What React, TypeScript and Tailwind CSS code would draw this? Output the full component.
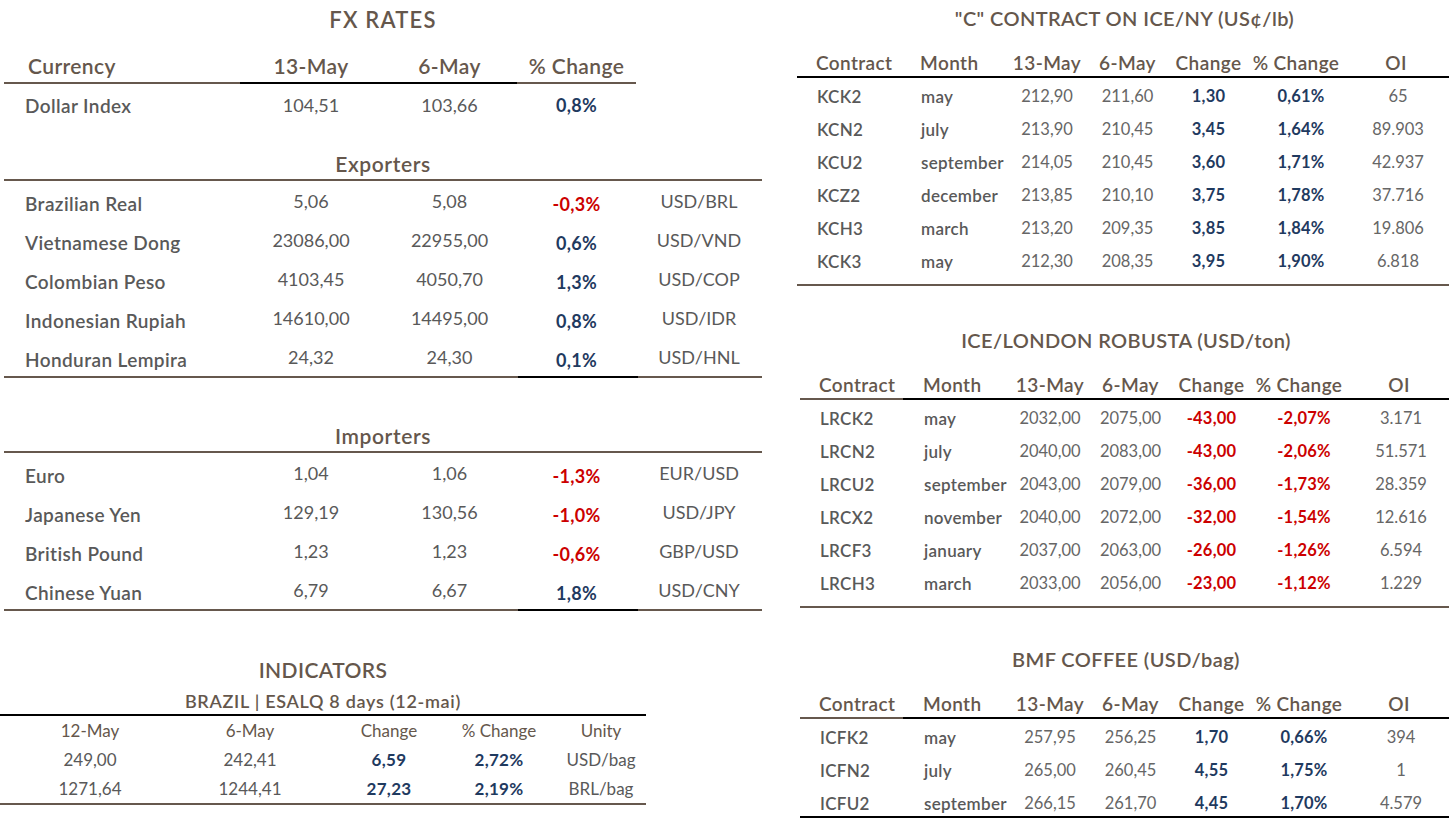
import React from "react";

type FxRow = { name: string; a: string; b: string; pct: string; unit: string };
type FutRow = { code: string; month: string; a: string; b: string; chg: string; pct: string; oi: string };

const BROWN = "bg-[#66584d]";

const exporters: FxRow[] = [
  { name: "Brazilian Real", a: "5,06", b: "5,08", pct: "-0,3%", unit: "USD/BRL" },
  { name: "Vietnamese Dong", a: "23086,00", b: "22955,00", pct: "0,6%", unit: "USD/VND" },
  { name: "Colombian Peso", a: "4103,45", b: "4050,70", pct: "1,3%", unit: "USD/COP" },
  { name: "Indonesian Rupiah", a: "14610,00", b: "14495,00", pct: "0,8%", unit: "USD/IDR" },
  { name: "Honduran Lempira", a: "24,32", b: "24,30", pct: "0,1%", unit: "USD/HNL" },
];

const importers: FxRow[] = [
  { name: "Euro", a: "1,04", b: "1,06", pct: "-1,3%", unit: "EUR/USD" },
  { name: "Japanese Yen", a: "129,19", b: "130,56", pct: "-1,0%", unit: "USD/JPY" },
  { name: "British Pound", a: "1,23", b: "1,23", pct: "-0,6%", unit: "GBP/USD" },
  { name: "Chinese Yuan", a: "6,79", b: "6,67", pct: "1,8%", unit: "USD/CNY" },
];

const arabica: FutRow[] = [
  { code: "KCK2", month: "may", a: "212,90", b: "211,60", chg: "1,30", pct: "0,61%", oi: "65" },
  { code: "KCN2", month: "july", a: "213,90", b: "210,45", chg: "3,45", pct: "1,64%", oi: "89.903" },
  { code: "KCU2", month: "september", a: "214,05", b: "210,45", chg: "3,60", pct: "1,71%", oi: "42.937" },
  { code: "KCZ2", month: "december", a: "213,85", b: "210,10", chg: "3,75", pct: "1,78%", oi: "37.716" },
  { code: "KCH3", month: "march", a: "213,20", b: "209,35", chg: "3,85", pct: "1,84%", oi: "19.806" },
  { code: "KCK3", month: "may", a: "212,30", b: "208,35", chg: "3,95", pct: "1,90%", oi: "6.818" },
];

const robusta: FutRow[] = [
  { code: "LRCK2", month: "may", a: "2032,00", b: "2075,00", chg: "-43,00", pct: "-2,07%", oi: "3.171" },
  { code: "LRCN2", month: "july", a: "2040,00", b: "2083,00", chg: "-43,00", pct: "-2,06%", oi: "51.571" },
  { code: "LRCU2", month: "september", a: "2043,00", b: "2079,00", chg: "-36,00", pct: "-1,73%", oi: "28.359" },
  { code: "LRCX2", month: "november", a: "2040,00", b: "2072,00", chg: "-32,00", pct: "-1,54%", oi: "12.616" },
  { code: "LRCF3", month: "january", a: "2037,00", b: "2063,00", chg: "-26,00", pct: "-1,26%", oi: "6.594" },
  { code: "LRCH3", month: "march", a: "2033,00", b: "2056,00", chg: "-23,00", pct: "-1,12%", oi: "1.229" },
];

const bmf: FutRow[] = [
  { code: "ICFK2", month: "may", a: "257,95", b: "256,25", chg: "1,70", pct: "0,66%", oi: "394" },
  { code: "ICFN2", month: "july", a: "265,00", b: "260,45", chg: "4,55", pct: "1,75%", oi: "1" },
  { code: "ICFU2", month: "september", a: "266,15", b: "261,70", chg: "4,45", pct: "1,70%", oi: "4.579" },
];

const tone = (v: string) => (v.startsWith("-") ? "text-[#cc0000]" : "text-[#1f3a5f]");

function FxLine({ black }: { black: "head" | "foot" }) {
  if (black === "head") {
    return (
      <div className="flex h-[2px] w-[632px]">
        <div className={`w-[236px] ${BROWN}`} />
        <div className="w-[277px] bg-black" />
        <div className={`flex-1 ${BROWN}`} />
      </div>
    );
  }
  return (
    <div className="flex h-[2px]">
      <div className={`w-[514px] ${BROWN}`} />
      <div className="w-[120px] bg-black" />
      <div className={`flex-1 ${BROWN}`} />
    </div>
  );
}

function FxRows({ rows }: { rows: FxRow[] }) {
  return (
    <>
      {rows.map((r) => (
        <div key={r.name} className="grid h-[39px] grid-cols-[236px_142px_135px_119px_126px] items-center pt-[6px] text-[18px]">
          <div className="pl-[21px] text-[19px] font-semibold tracking-[0.4px] text-[#595959]">{r.name}</div>
          <div className="pb-[5px] text-center text-[#595959]">{r.a}</div>
          <div className="pb-[5px] text-center text-[#595959]">{r.b}</div>
          <div className={`text-center font-bold tracking-[0.3px] ${tone(r.pct)}`}>{r.pct}</div>
          <div className="pb-[5px] text-center text-[#595959]">{r.unit}</div>
        </div>
      ))}
    </>
  );
}

function FutTable({ title, rows, splitHead, last }: { title: string; rows: FutRow[]; splitHead?: boolean; last?: boolean }) {
  const cols = "grid grid-cols-[104px_106px_80px_81px_81px_94px_106px]";
  return (
    <div>
      <div className="flex h-[26px] items-center justify-center text-[20px] font-semibold tracking-[0.4px] text-[#65574c]">{title}</div>
      <div className={`${cols} mt-[19px] h-[24px] items-center text-[19px] font-semibold tracking-[0.4px] text-[#65574c]`}>
        <div className="pl-[19px]">Contract</div>
        <div className="pl-[19px]">Month</div>
        <div className="text-center">13-May</div>
        <div className="text-center">6-May</div>
        <div className="text-center">Change</div>
        <div className="text-center">% Change</div>
        <div className="text-center">OI</div>
      </div>
      <div className="mt-[2px] flex h-[2px]">
        <div className={splitHead ? `w-[103px] ${BROWN}` : "w-[103px] bg-black"} />
        <div className="flex-1 bg-black" />
      </div>
      {rows.map((r) => (
        <div key={r.code} className={`${cols} h-[33px] items-center pt-[3px] text-[16.5px]`}>
          <div className="pl-[20px] text-[17px] font-semibold tracking-[0.3px] text-[#595959]">{r.code}</div>
          <div className="pl-[20px] text-[17px] font-semibold tracking-[0.3px] text-[#595959]">{r.month}</div>
          <div className="text-center text-[#666666]">{r.a}</div>
          <div className="text-center text-[#666666]">{r.b}</div>
          <div className={`text-center font-bold tracking-[0.2px] ${tone(r.chg)}`}>{r.chg}</div>
          <div className={`pl-[10px] text-center font-bold tracking-[0.2px] ${tone(r.pct)}`}>{r.pct}</div>
          <div className="pl-[4px] text-center text-[#666666]">{r.oi}</div>
        </div>
      ))}
      <div className={last ? "mt-[-2px] h-[2px] bg-black" : `mt-[8px] h-[2px] ${BROWN}`} />
    </div>
  );
}

export default function App() {
  return (
    <div className="flex h-[819px] w-[1449px] overflow-hidden bg-white font-['Lato',sans-serif] leading-none">
      {/* left: fx + indicators */}
      <div className="w-[762px] shrink-0">
        <div className="ml-[4px]">
          <div className="flex h-[40px] items-center justify-center text-[22px] font-semibold tracking-[1.2px] text-[#65574c]">FX RATES</div>
          <div className="grid h-[42px] w-[632px] grid-cols-[236px_142px_135px_119px] items-end pb-[6px] text-[21px] font-semibold tracking-[0.4px] text-[#65574c]">
            <div className="pl-[24px]">Currency</div>
            <div className="text-center">13-May</div>
            <div className="text-center">6-May</div>
            <div className="text-center">% Change</div>
          </div>
          <FxLine black="head" />
          <div className="grid h-[42px] grid-cols-[236px_142px_135px_119px_126px] items-center text-[18px]">
            <div className="pl-[21px] text-[19px] font-semibold tracking-[0.4px] text-[#595959]">Dollar Index</div>
            <div className="text-center text-[#595959]">104,51</div>
            <div className="text-center text-[#595959]">103,66</div>
            <div className="text-center font-bold tracking-[0.3px] text-[#1f3a5f]">0,8%</div>
            <div />
          </div>

          <div className="flex h-[53px] items-end justify-center pb-[5px] text-[21px] font-semibold tracking-[0.6px] text-[#65574c]">Exporters</div>
          <div className={`h-[2px] ${BROWN}`} />
          <FxRows rows={exporters} />
          <FxLine black="foot" />

          <div className="flex h-[73px] items-end justify-center pb-[5px] text-[21px] font-semibold tracking-[0.6px] text-[#65574c]">Importers</div>
          <div className={`h-[2px] ${BROWN}`} />
          <FxRows rows={importers} />
          <FxLine black="foot" />
        </div>

        {/* indicators */}
        <div className="w-[646px]">
          <div className="mt-[46px] flex h-[24px] items-center justify-center text-[21px] font-semibold tracking-[0.4px] text-[#65574c]">INDICATORS</div>
          <div className="mt-[8px] flex h-[24px] items-center justify-center text-[18px] font-semibold tracking-[0.7px] text-[#65574c]">
            BRAZIL | ESALQ 8 days (12-mai)
          </div>
          <div className="mt-[1px] h-[2px] bg-black" />
          <div className="grid h-[29px] grid-cols-[180px_140px_138px_82px_106px] items-center text-[17px] text-[#65574c]">
            <div className="text-center">12-May</div>
            <div className="text-center">6-May</div>
            <div className="text-center">Change</div>
            <div className="text-center">% Change</div>
            <div className="pl-[16px] text-center">Unity</div>
          </div>
          {[
            ["249,00", "242,41", "6,59", "2,72%", "USD/bag"],
            ["1271,64", "1244,41", "27,23", "2,19%", "BRL/bag"],
          ].map((r) => (
            <div key={r[0]} className="grid h-[29px] grid-cols-[180px_140px_138px_82px_106px] items-center text-[17px]">
              <div className="text-center text-[#595959]">{r[0]}</div>
              <div className="text-center text-[#595959]">{r[1]}</div>
              <div className="text-center font-bold tracking-[0.3px] text-[#1f3a5f]">{r[2]}</div>
              <div className="text-center font-bold tracking-[0.3px] text-[#1f3a5f]">{r[3]}</div>
              <div className="pl-[16px] text-center text-[#595959]">{r[4]}</div>
            </div>
          ))}
          <div className={`h-[2px] ${BROWN}`} />
        </div>
      </div>

      {/* right: futures */}
      <div className="ml-[35px] flex-1">
        <div className="mt-[5px]">
          <FutTable title={'"C" CONTRACT ON ICE/NY (US¢/lb)'} rows={arabica} />
        </div>
        <div className="ml-[3px] mt-[41px]">
          <FutTable title="ICE/LONDON ROBUSTA (USD/ton)" rows={robusta} splitHead />
        </div>
        <div className="ml-[3px] mt-[38px]">
          <FutTable title="BMF COFFEE (USD/bag)" rows={bmf} splitHead last />
        </div>
      </div>
    </div>
  );
}
